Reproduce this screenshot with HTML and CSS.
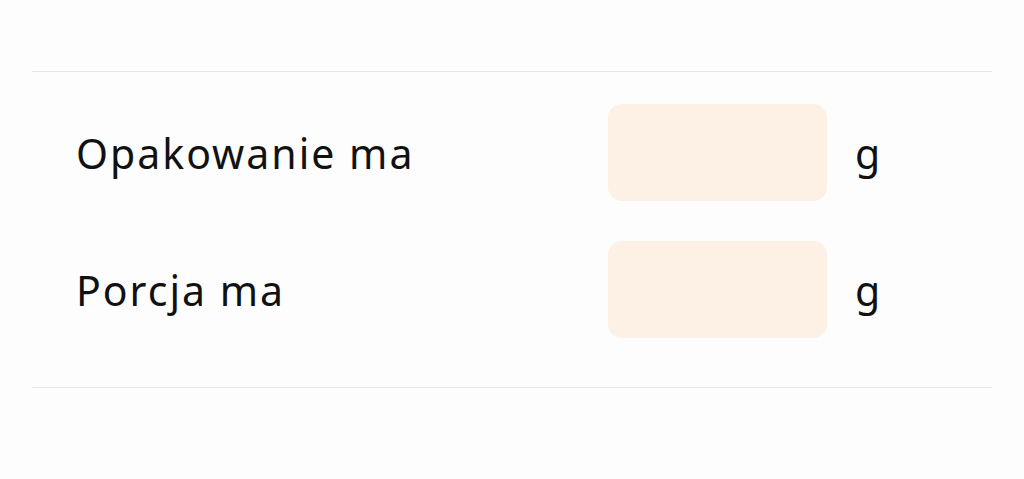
FILE: index.html
```html
<!DOCTYPE html>
<html lang="pl">
<head>
  <meta charset="UTF-8">
  <meta name="viewport" content="width=device-width, initial-scale=1.0">
  <title>Opakowanie</title>
  <link rel="stylesheet" href="styles.css">
</head>
<body>
  <div class="panel">
    <div class="row">
      <label for="pack">Opakowanie ma</label>
      <input type="text" id="pack" name="pack">
      <span class="unit">g</span>
    </div>
    <div class="row">
      <label for="portion">Porcja ma</label>
      <input type="text" id="portion" name="portion">
      <span class="unit">g</span>
    </div>
  </div>
</body>
</html>
```

FILE: styles.css
```css
body {
  font-family: "Noto Sans", Arial, sans-serif;
  background-color: #fdfdfd;
  color: #111;
  margin: 0;
  padding: 71px 32px 0;
}
.panel {
  border-top: 1px solid #e6e6e6;
  border-bottom: 1px solid #e6e6e6;
  padding: 32px 0 49px 44px;
  display: flex;
  flex-direction: column;
  gap: 40px;
}
.row {
  display: grid;
  grid-template-columns: 1fr 219px 137px;
  column-gap: 28px;
  align-items: center;
}
label,
.unit {
  font-size: 41px;
  letter-spacing: 2px;
}
input[type="text"] {
  height: 97px;
  box-sizing: border-box;
  border: none;
  border-radius: 14px;
  background-color: #fdf0e4;
  font-size: 32px;
  padding: 0 16px;
}
```
